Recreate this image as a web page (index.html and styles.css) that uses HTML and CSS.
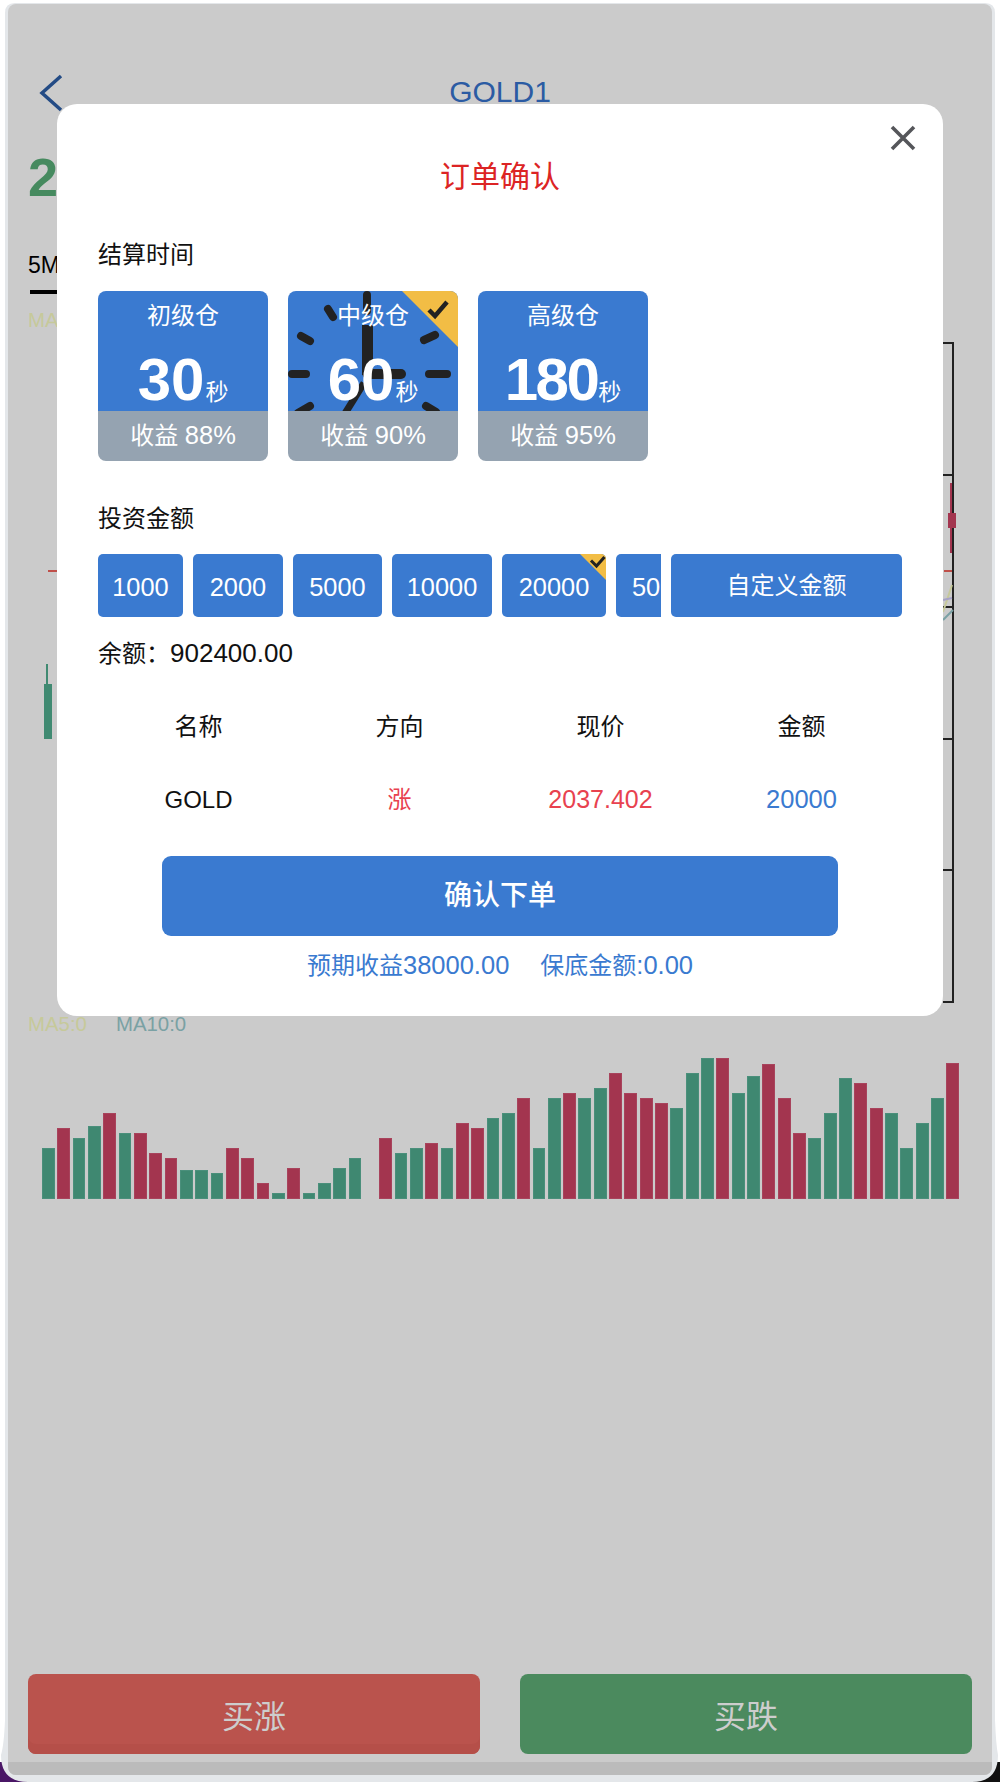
FILE: index.html
```html
<!DOCTYPE html>
<html lang="zh-CN">
<head>
<meta charset="utf-8">
<title>GOLD1</title>
<link rel="stylesheet" href="styles.css">
</head>
<body>
<svg class="frame-art" viewBox="0 0 1000 1782" aria-hidden="true">
  <path class="corner-purple" d="M0 1762H30V1782H0Z"/>
  <path class="corner-black" d="M970 1762H1000V1782H970Z"/>
  <path class="frame-fill" d="M5 13Q5 3 15 3H985Q995 3 995 13V1720Q996 1745 998 1755Q998 1782 972 1782H28Q1 1782 1 1755Q4 1745 5 1720Z"/>
</svg>
<main class="screen">
  <header class="nav">
    <svg class="back" viewBox="0 0 24 38"><polyline points="22,2 3,19 22,36"/></svg>
    <h1 class="nav-title">GOLD1</h1>
  </header>
  <div class="price">2037.402</div>
  <div class="tabs"><span class="tab">5M</span></div>
  <div class="ma-row"><span class="ma5">MA5:0</span><span class="ma10">MA10:0</span></div>
  <svg class="kline" viewBox="8 334 984 676" aria-hidden="true">
    <g class="axis">
      <path d="M953 343V1002M943 343H954M943 475H954M943 607H954M943 739H954M943 870H954M943 1002H954"/>
    </g>
    <path class="last-line" d="M48 571H57M944 571H952"/>
    <path class="wick-green" d="M47 664V684"/>
    <rect class="body-green" x="44" y="684" width="8" height="55"/>
    <path class="wick-red" d="M951 483V553"/>
    <rect class="body-red" x="948" y="513" width="8" height="15"/>
    <path class="line-olive" d="M943 612L952 585"/>
    <path class="line-purple" d="M943 600L952 598"/>
    <path class="line-teal" d="M943 620L953 610"/>
  </svg>
  <div class="ma-row ma-row-vol"><span class="ma5">MA5:0</span><span class="ma10">MA10:0</span></div>
  <div class="volume">
    <i class="g" style="height:51px"></i><i class="r" style="height:71px"></i><i class="g" style="height:61px"></i><i class="g" style="height:73px"></i><i class="r" style="height:86px"></i><i class="g" style="height:66px"></i><i class="r" style="height:66px"></i><i class="r" style="height:46px"></i><i class="r" style="height:41px"></i><i class="g" style="height:29px"></i><i class="g" style="height:29px"></i><i class="g" style="height:26px"></i><i class="r" style="height:51px"></i><i class="r" style="height:41px"></i><i class="r" style="height:16px"></i><i class="g" style="height:6px"></i><i class="r" style="height:31px"></i><i class="g" style="height:6px"></i><i class="g" style="height:16px"></i><i class="g" style="height:31px"></i><i class="g" style="height:41px"></i>
    <i class="blank"></i>
    <i class="r" style="height:61px"></i><i class="g" style="height:46px"></i><i class="g" style="height:51px"></i><i class="r" style="height:56px"></i><i class="g" style="height:51px"></i><i class="r" style="height:76px"></i><i class="r" style="height:71px"></i><i class="g" style="height:81px"></i><i class="g" style="height:86px"></i><i class="r" style="height:101px"></i><i class="g" style="height:51px"></i><i class="g" style="height:101px"></i><i class="r" style="height:106px"></i><i class="g" style="height:101px"></i><i class="g" style="height:111px"></i><i class="r" style="height:126px"></i><i class="r" style="height:106px"></i><i class="r" style="height:101px"></i><i class="r" style="height:96px"></i><i class="g" style="height:91px"></i><i class="g" style="height:126px"></i><i class="g" style="height:141px"></i><i class="r" style="height:141px"></i><i class="g" style="height:106px"></i><i class="g" style="height:123px"></i><i class="r" style="height:135px"></i><i class="r" style="height:101px"></i><i class="r" style="height:66px"></i><i class="g" style="height:61px"></i><i class="g" style="height:86px"></i><i class="g" style="height:121px"></i><i class="r" style="height:116px"></i><i class="r" style="height:91px"></i><i class="g" style="height:86px"></i><i class="g" style="height:51px"></i><i class="g" style="height:76px"></i><i class="g" style="height:101px"></i><i class="r" style="height:136px"></i>
  </div>
  <div class="actions">
    <button class="buy buy-up">买涨</button>
    <button class="buy buy-down">买跌</button>
  </div>
  <div class="home-band"></div>

  <section class="modal">
    <svg class="close" viewBox="0 0 26 26"><path d="M2 2L24 24M24 2L2 24"/></svg>
    <h2 class="modal-title">订单确认</h2>

    <div class="label label-first">结算时间</div>
    <div class="cards">
      <div class="card">
        <div class="card-top">
          <div class="card-name">初级仓</div>
          <div class="card-time"><span class="sec">30</span><span class="unit">秒</span></div>
        </div>
        <div class="card-foot">收益 <span class="num">88%</span></div>
      </div>
      <div class="card">
        <div class="card-top">
          <svg class="clock" viewBox="0 0 170 120" aria-hidden="true">
            <path class="clock-ticks" d="M4 83H18M141 83H159M79 4V20M40 18L45 26M13 45L22 50M136 49L147 44M10 122L22 115M138 115L148 121"/>
            <path class="clock-min" d="M79.5 84V34"/>
            <path class="clock-hour" d="M79.5 83H113"/>
            <path class="clock-sec" d="M76 92L56 124"/>
          </svg>
          <div class="card-name">中级仓</div>
          <div class="card-time"><span class="sec">60</span><span class="unit">秒</span></div>
        </div>
        <div class="card-foot">收益 <span class="num">90%</span></div>
        <svg class="badge badge-lg" viewBox="0 0 56 56" aria-hidden="true">
          <path class="badge-bg" d="M0 0H56V56Z"/>
          <path class="badge-check" d="M27 19L33 25L45 11"/>
        </svg>
      </div>
      <div class="card">
        <div class="card-top">
          <div class="card-name">高级仓</div>
          <div class="card-time"><span class="sec sec-tight">180</span><span class="unit">秒</span></div>
        </div>
        <div class="card-foot">收益 <span class="num">95%</span></div>
      </div>
    </div>

    <div class="label label-second">投资金额</div>
    <div class="amounts">
      <div class="amt">1000</div>
      <div class="amt">2000</div>
      <div class="amt">5000</div>
      <div class="amt">10000</div>
      <div class="amt amt-on">20000
        <svg class="badge badge-sm" viewBox="0 0 26 26" aria-hidden="true">
          <path class="badge-bg" d="M0 0H26V26Z"/>
          <path class="badge-check badge-check-sm" d="M11 6.5L16.5 12L24.5 3"/>
        </svg>
      </div>
      <div class="amt amt-clip">50000</div>
      <div class="amt amt-custom">自定义金额</div>
    </div>

    <div class="balance">余额：<span class="num num-wide">902400.00</span></div>

    <div class="order">
      <div class="cell">名称</div>
      <div class="cell">方向</div>
      <div class="cell">现价</div>
      <div class="cell">金额</div>
      <div class="cell">GOLD</div>
      <div class="cell rise">涨</div>
      <div class="cell rise"><span class="num num-price">2037.402</span></div>
      <div class="cell blue"><span class="num">20000</span></div>
    </div>

    <button class="confirm">确认下单</button>
    <div class="notes">
      <span>预期收益<span class="num">38000.00</span></span>
      <span>保底金额<span class="num">:0.00</span></span>
    </div>
  </section>
</main>
</body>
</html>
```
FILE: styles.css
```css
* { box-sizing: border-box; }
html, body { margin: 0; padding: 0; }
body {
  position: relative;
  width: 1000px;
  height: 1782px;
  overflow: hidden;
  background: #fff;
  padding: 4px 8px 0;
  font-family: "Liberation Sans", "Noto Sans CJK SC", sans-serif;
  color: #111;
}

/* device frame behind the screen */
.frame-art { position: absolute; left: 0; top: 0; width: 1000px; height: 1782px; }
.corner-purple { fill: #4a1666; }
.corner-black { fill: #111; }
.frame-fill { fill: #e4e7ea; }

.screen {
  position: relative;
  display: flex;
  flex-direction: column;
  width: 984px;
  height: 1771px;
  background: #cbcbcb;
  border-radius: 8px;
  overflow: hidden;
}

.nav {
  display: flex;
  align-items: center;
  justify-content: center;
  position: relative;
  height: 48px;
  margin-top: 64px;
  flex: none;
}
.back { position: absolute; left: 31px; top: 6px; width: 24px; height: 38px; }
.back polyline { fill: none; stroke: #234b85; stroke-width: 3.5; }
.nav-title { margin: 0; font-size: 30px; font-weight: 400; color: #2b5ba3; line-height: 48px; }

.price {
  margin: 31px 0 0 20px;
  font-size: 54px;
  line-height: 60px;
  font-weight: 700;
  color: #468a5f;
  flex: none;
}
.tabs { margin: 43px 0 0 20px; flex: none; height: 44px; }
.tab {
  display: block;
  font-size: 23px;
  line-height: 30px;
  color: #000;
  width: 70px;
}
.tab::after {
  content: "";
  display: block;
  height: 4px;
  margin: 10px 0 0 2px;
  background: #000;
}
.ma-row {
  display: flex;
  gap: 29px;
  margin: 12px 0 0 20px;
  font-size: 20.4px;
  line-height: 28px;
  height: 28px;
  flex: none;
}
.ma-row-vol { margin-top: 0; }
.ma5 { color: #c6c99a; }
.ma10 { color: #7aa1a4; }

.kline { display: block; width: 984px; height: 676px; flex: none; }
.axis path { fill: none; stroke: #222; stroke-width: 2; }
.last-line { fill: none; stroke: #bf4f49; stroke-width: 2; }
.wick-green { fill: none; stroke: #408a72; stroke-width: 2; }
.body-green { fill: #408a72; }
.wick-red { fill: none; stroke: #a3354f; stroke-width: 2; }
.body-red { fill: #a3354f; }
.line-olive { fill: none; stroke: #c6c99a; stroke-width: 2; }
.line-purple { fill: none; stroke: #a7a3c6; stroke-width: 2; }
.line-teal { fill: none; stroke: #7aa1a4; stroke-width: 2; }

.volume {
  display: flex;
  align-items: flex-end;
  gap: 2.52px;
  height: 161px;
  padding-left: 34px;
  flex: none;
}
.volume i { display: block; width: 12.82px; flex: none; border: 1px solid transparent; }
.volume .g { background: #3f8871; border-color: #4a8f7b; }
.volume .r { background: #a3354f; border-color: #a8435c; }
.volume .blank { height: 0; border: 0; }

.actions {
  display: flex;
  gap: 40px;
  margin-top: 475px;
  padding: 0 20px;
  flex: none;
}
.buy {
  width: 452px;
  height: 80px;
  border: 0;
  border-radius: 8px;
  font: inherit;
  font-size: 32px;
  color: #cdcdcd;
  padding: 0;
}
.buy-up { background: #ba534d; box-shadow: inset 0 -10px 0 #b54f49; }
.buy-down { background: #4b8a5e; }
.home-band { height: 13px; margin-top: 8px; background: #bbb; flex: none; }

/* order dialog */
.modal {
  position: absolute;
  left: 49px;
  top: 100px;
  width: 886px;
  padding: 53px 41px 33px;
  background: #fff;
  border-radius: 20px;
}
.close { position: absolute; left: 833px; top: 21px; width: 26px; height: 26px; }
.close path { fill: none; stroke: #55565a; stroke-width: 3.6; }
.modal-title {
  margin: 0;
  text-align: center;
  font-size: 30px;
  font-weight: 400;
  line-height: 40px;
  color: #dc2424;
}
.label { font-size: 24px; line-height: 34px; color: #111; }
.label-first { margin-top: 41px; }
.label-second { margin-top: 41px; }

.cards { display: flex; gap: 20px; margin-top: 19px; }
.card {
  position: relative;
  width: 170px;
  height: 170px;
  border-radius: 8px;
  overflow: hidden;
  color: #fff;
}
.card-top {
  position: relative;
  height: 120px;
  background: #3a7ad0;
  text-align: center;
  overflow: hidden;
}
.clock { position: absolute; left: 0; top: 0; width: 170px; height: 120px; }
.clock path { fill: none; stroke: #222; }
.clock-ticks { stroke-width: 8; stroke-linecap: round; }
.clock-min { stroke-width: 11; }
.clock-hour { stroke-width: 10; stroke-linecap: round; }
.clock-sec { stroke-width: 7; }
.card-name { position: relative; font-size: 24px; line-height: 34px; padding-top: 8px; height: 42px; }
.card-time {
  position: relative;
  display: flex;
  justify-content: center;
  align-items: baseline;
  margin-top: 16px;
  line-height: 62px;
}
.sec { font-size: 60px; font-weight: 700; }
.sec-tight { letter-spacing: -2.5px; }
.unit { font-size: 23px; margin-left: 1px; }
.card-foot {
  height: 50px;
  background: #95a3b1;
  text-align: center;
  font-size: 24px;
  line-height: 48px;
}
.num { font-size: 25.5px; }
.num-wide { font-size: 26px; }
.badge { position: absolute; right: 0; top: 0; display: block; }
.badge-lg { width: 56px; height: 56px; }
.badge-sm { width: 26px; height: 26px; }
.badge-bg { fill: #f2bd45; }
.badge-check { fill: none; stroke: #222; stroke-width: 4.5; }
.badge-check-sm { stroke-width: 3; }

.amounts {
  display: grid;
  grid-template-columns: 85px 90px 89px 100px 104px 45px 231px;
  gap: 10px;
  margin-top: 18px;
}
.amt {
  position: relative;
  height: 63px;
  background: #3a7ad0;
  border-radius: 5px;
  color: #fff;
  text-align: center;
  font-size: 25.4px;
  line-height: 67px;
  overflow: hidden;
  white-space: nowrap;
}
.amt-clip { text-align: left; padding-left: 16px; border-radius: 5px 0 0 5px; }
.amt-custom { font-size: 24px; line-height: 63px; }

.balance { margin-top: 19px; font-size: 24px; line-height: 34px; color: #111; }

.order {
  display: grid;
  grid-template-columns: repeat(4, 1fr);
  grid-auto-rows: 73px;
  margin-top: 19px;
}
.cell { text-align: center; font-size: 24px; line-height: 73px; color: #111; }
.rise { color: #e8424f; }
.blue { color: #3a7ad0; }
.num-price { font-size: 25px; }

.confirm {
  display: block;
  width: 676px;
  height: 80px;
  margin: 20px auto 0;
  border: 0;
  border-radius: 9px;
  background: #3a7ad0;
  color: #fff;
  font: inherit;
  font-size: 28px;
  font-weight: 500;
  line-height: 76px;
  padding: 0;
}
.notes {
  display: flex;
  justify-content: center;
  gap: 31px;
  margin-top: 12px;
  font-size: 24px;
  line-height: 34px;
  color: #3a7ad0;
}
```
